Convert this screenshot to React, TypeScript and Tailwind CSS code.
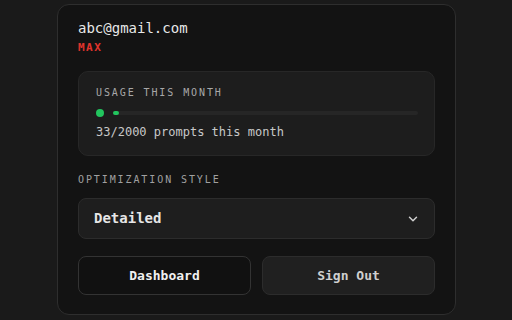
import { ChevronDown } from "lucide-react"

const mono = { fontFamily: '"DejaVu Sans Mono", "Liberation Mono", monospace' }

export default function App() {
  const used = 33
  const limit = 2000
  const pct = Math.max((used / limit) * 100, 2)

  return (
    <div className="w-[512px] h-[320px] bg-[#1a1a1a] overflow-hidden pt-[4px] pl-[57px]" style={mono}>
      <div className="w-[399px] h-[311px] rounded-[12px] border border-[#2e2e2e] bg-[#131313] px-[20px] pt-[13px]">
        <div className="text-[14px] leading-[20px] text-[#e8e8e8]">abc@gmail.com</div>
        <div className="mt-[3px] text-[11px] leading-[14px] font-bold tracking-[1.5px] text-[#e0342c]">MAX</div>

        <div className="mt-[16px] rounded-[10px] border border-[#272727] bg-[#1d1d1d] pl-[17px] pr-[16px] pt-[15px] pb-[14px]">
          <div className="text-[10px] leading-[12px] tracking-[1.9px] text-[#a8a8a8]">USAGE THIS MONTH</div>
          <div className="mt-[10px] flex items-center gap-[9px]">
            <div className="w-[8px] h-[8px] rounded-full bg-[#22c55e]" />
            <div className="flex-1 h-[4px] rounded-full bg-[#262626]">
              <div className="h-full rounded-full bg-[#22c55e]" style={{ width: `${pct}%` }} />
            </div>
          </div>
          <div className="mt-[6px] text-[12px] leading-[18px] text-[#c8c8c8]">
            {used}/{limit} prompts this month
          </div>
        </div>

        <div className="mt-[18px] text-[10px] leading-[12px] tracking-[1.9px] text-[#a0a0a0]">OPTIMIZATION STYLE</div>

        <div className="mt-[12px] h-[41px] rounded-[8px] border border-[#2c2c2c] bg-[#1e1e1e] flex items-center justify-between pl-[15px] pr-[14px]">
          <span className="text-[14px] font-semibold text-[#e6e6e6]">Detailed</span>
          <ChevronDown size={14} strokeWidth={2.5} className="text-[#d0d0d0]" />
        </div>

        <div className="mt-[17px] flex gap-[11px]">
          <button className="flex-1 h-[39px] rounded-[8px] border border-[#333333] bg-[#111111] text-[13px] font-bold text-[#f0f0f0]">
            Dashboard
          </button>
          <button className="flex-1 h-[39px] rounded-[8px] border border-[#2c2c2c] bg-[#202020] text-[13px] font-bold text-[#cfcfcf]">
            Sign Out
          </button>
        </div>
      </div>
    </div>
  )
}
